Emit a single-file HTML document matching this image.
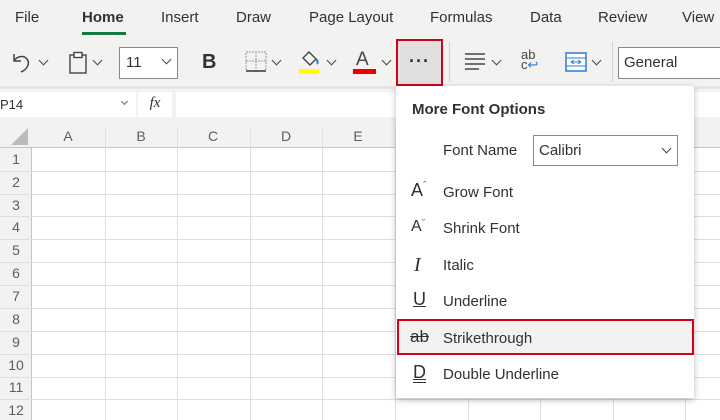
<!DOCTYPE html>
<html><head><style>
*{margin:0;padding:0;box-sizing:border-box}
body{width:720px;height:420px;overflow:hidden;background:#f3f2f1;font-family:"Liberation Sans",sans-serif;color:#323130;position:relative}
.a{position:absolute}
.tab{position:absolute;top:9px;font-size:15px;color:#323130}
.chev{position:absolute;width:7px;height:7px;border-right:1.4px solid #444;border-bottom:1.4px solid #444;transform:rotate(45deg)}
.grid{position:absolute;left:0;top:125px;width:720px;height:295px;background:#fff}
.rh{position:absolute;left:0;width:32px;text-align:center;font-size:14px;color:#605e5c}
.ch{position:absolute;top:128px;font-size:14px;color:#605e5c;text-align:center;width:72px}
.mi{position:absolute;left:443px;font-size:15px;color:#323130}
.ic{position:absolute;left:411px;font-size:18px;color:#323130}
</style></head><body>
<div class="tab" style="left:15px">File</div>
<div class="tab" style="left:82px;font-weight:bold">Home</div>
<div class="a" style="left:82px;top:32px;width:44px;height:3px;background:#107c41"></div>
<div class="tab" style="left:161px">Insert</div>
<div class="tab" style="left:236px">Draw</div>
<div class="tab" style="left:309px">Page Layout</div>
<div class="tab" style="left:430px">Formulas</div>
<div class="tab" style="left:530px">Data</div>
<div class="tab" style="left:598px">Review</div>
<div class="tab" style="left:682px">View</div>

<!-- toolbar -->
<svg class="a" style="left:10px;top:50px" width="26" height="26" viewBox="0 0 26 26"><path d="M4 4v7h7M4 11c3-5 10-6 13-2s1 10-6 13" fill="none" stroke="#444" stroke-width="1.5"/></svg>
<div class="chev" style="left:40px;top:57px"></div>
<svg class="a" style="left:68px;top:51px" width="20" height="24"><rect x="2" y="4" width="16" height="18" fill="none" stroke="#444" stroke-width="1.4"/><rect x="6" y="1.5" width="8" height="5" fill="#fff" stroke="#444" stroke-width="1.4"/></svg>
<div class="chev" style="left:94px;top:57px"></div>
<div class="a" style="left:119px;top:47px;width:59px;height:32px;border:1px solid #8a8886;background:#fff;font-size:15px;padding:6px 0 0 6px">11</div>
<div class="chev" style="left:163px;top:56px"></div>
<div class="a" style="left:202px;top:51px;font-size:20px;font-weight:bold">B</div>
<svg class="a" style="left:245px;top:50px" width="22" height="24"><rect x="1" y="2" width="20" height="19" fill="none" stroke="#999" stroke-dasharray="2 1"/><path d="M11 2v19M1 11h20" stroke="#999" stroke-dasharray="2 1"/><path d="M1 21h20" stroke="#333" stroke-width="1.5"/></svg>
<div class="chev" style="left:273px;top:57px"></div>
<svg class="a" style="left:297px;top:48px" width="26" height="28"><path d="M6 10l6-6 7 7-6 6z" fill="none" stroke="#444" stroke-width="1.4"/><path d="M19 11c2 2 2 4 1 5" stroke="#2b7cd3" stroke-width="2" fill="none"/><rect x="2" y="21" width="20" height="5" fill="#ffff00"/></svg>
<div class="chev" style="left:328px;top:57px"></div>
<div class="a" style="left:356px;top:49px;font-size:19px;color:#444">A</div>
<div class="a" style="left:353px;top:69px;width:23px;height:5px;background:#e00"></div>
<div class="chev" style="left:383px;top:57px"></div>
<div class="a" style="left:396px;top:39px;width:47px;height:47px;background:#e1dfdd;border:2px solid #d0021b;text-align:center;font-size:18px;font-weight:bold;padding-top:10px;letter-spacing:1px">···</div>
<div class="a" style="left:449px;top:42px;width:1px;height:40px;background:#d2d0ce"></div>
<svg class="a" style="left:464px;top:51px" width="22" height="22"><path d="M1 3h20M1 8h20M1 13h20M1 18h14" stroke="#444" stroke-width="1.4"/></svg>
<div class="chev" style="left:493px;top:57px"></div>
<div class="a" style="left:521px;top:50px;font-size:13px;line-height:10px;color:#444">ab<br>c<span style="color:#2b7cd3">↩</span></div>
<svg class="a" style="left:565px;top:51px" width="22" height="22"><rect x="1" y="2" width="20" height="18" fill="#fff" stroke="#2b7cd3" stroke-width="1.5"/><path d="M1 7h20M1 15h20" stroke="#2b7cd3"/><path d="M6 11h10M6 11l3-2M6 11l3 2M16 11l-3-2M16 11l-3 2" stroke="#2b7cd3"/></svg>
<div class="chev" style="left:593px;top:57px"></div>
<div class="a" style="left:612px;top:42px;width:1px;height:40px;background:#d2d0ce"></div>
<div class="a" style="left:618px;top:47px;width:110px;height:32px;border:1px solid #8a8886;background:#fff;font-size:15px;padding:6px 0 0 5px">General</div>
<div class="a" style="left:0;top:86px;width:720px;height:3px;background:#e8e6e4"></div>

<!-- formula bar -->
<div class="a" style="left:0;top:92px;width:136px;height:25px;background:#fff;font-size:13px;padding:5px 0 0 0">P14</div>
<div class="a" style="left:122px;top:99px;width:5px;height:5px;border-right:1px solid #666;border-bottom:1px solid #666;transform:rotate(45deg)"></div>
<div class="a" style="left:138px;top:92px;width:34px;height:25px;background:#fff;font-family:'Liberation Serif',serif;font-style:italic;font-size:15px;text-align:center;padding-top:3px">fx</div>
<div class="a" style="left:176px;top:92px;width:544px;height:25px;background:#fff"></div>

<!-- grid -->
<div class="grid"></div>
<div class="a" style="left:0;top:125px;width:720px;height:23px;background:#f3f2f1;border-bottom:1px solid #c8c6c4"></div>
<div class="a" style="left:0;top:148px;width:32px;height:272px;background:#f3f2f1;border-right:1px solid #c8c6c4"></div>
<svg class="a" style="left:11px;top:128px" width="18" height="17"><path d="M17 0v17H0z" fill="#bdbbb9"/></svg>
<div class="ch" style="left:32px">A</div><div class="ch" style="left:105px">B</div><div class="ch" style="left:177px">C</div><div class="ch" style="left:250px">D</div><div class="ch" style="left:322px">E</div>
<svg class="a" style="left:0;top:125px" width="720" height="295">
<g stroke="#e1dfdd" stroke-width="1">
<path d="M105.5 2v293M177.5 2v293M250.5 2v293M322.5 2v293M395.5 2v293M468.5 2v293M540.5 2v293M613.5 2v293M685.5 2v293"/>
<path d="M0 46.5h720M0 69.5h720M0 91.5h720M0 114.5h720M0 137.5h720M0 160.5h720M0 183.5h720M0 206.5h720M0 229.5h720M0 252.5h720M0 274.5h720"/>
</g></svg>
<div class="rh" style="top:151px">1</div><div class="rh" style="top:174px">2</div><div class="rh" style="top:197px">3</div><div class="rh" style="top:219px">4</div><div class="rh" style="top:242px">5</div><div class="rh" style="top:265px">6</div><div class="rh" style="top:288px">7</div><div class="rh" style="top:311px">8</div><div class="rh" style="top:334px">9</div><div class="rh" style="top:357px">10</div><div class="rh" style="top:379px">11</div><div class="rh" style="top:402px">12</div>

<!-- menu -->
<div class="a" style="left:396px;top:86px;width:298px;height:312px;background:#fff;box-shadow:0 2px 6px rgba(0,0,0,.28)"></div>
<div class="a" style="left:412px;top:101px;font-size:15px;font-weight:bold">More Font Options</div>
<div class="mi" style="top:142px">Font Name</div>
<div class="a" style="left:533px;top:135px;width:145px;height:31px;border:1px solid #8a8886;font-size:15px;padding:6px 0 0 5px">Calibri</div>
<div class="chev" style="left:663px;top:145px"></div>
<div class="ic" style="top:180px">A<span style="font-size:11px;vertical-align:top;color:#2b7cd3">ˆ</span></div><div class="mi" style="top:184px">Grow Font</div>
<div class="ic" style="top:218px;font-size:16px">A<span style="font-size:11px;vertical-align:top;color:#2b7cd3">ˇ</span></div><div class="mi" style="top:220px">Shrink Font</div>
<div class="ic" style="top:254px;font-family:'Liberation Serif',serif;font-style:italic;font-size:20px;left:414px">I</div><div class="mi" style="top:257px">Italic</div>
<div class="ic" style="top:289px;left:413px;text-decoration:underline">U</div><div class="mi" style="top:293px">Underline</div>
<div class="a" style="left:397px;top:319px;width:297px;height:36px;background:#f3f2f1;border:2px solid #d0021b"></div>
<div class="ic" style="top:327px;left:410px;text-decoration:line-through;font-size:17px">ab</div><div class="mi" style="top:330px">Strikethrough</div>
<div class="ic" style="top:362px;left:413px;text-decoration:underline double">D</div><div class="mi" style="top:366px">Double Underline</div>
</body></html>
